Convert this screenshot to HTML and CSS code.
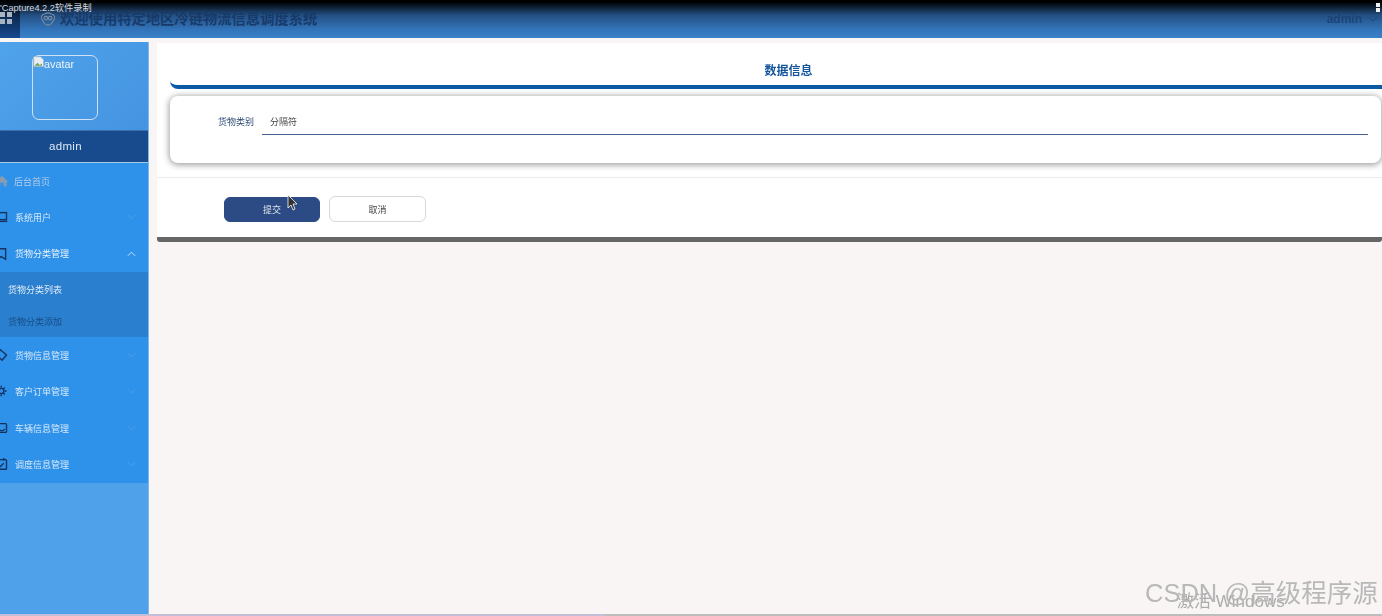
FILE: index.html
```html
<!DOCTYPE html>
<html lang="zh-CN">
<head>
<meta charset="utf-8">
<title>数据信息</title>
<link rel="stylesheet" href="styles.css">
</head>
<body>
<div class="page">
  <header class="topbar">
    <div class="grid-btn">
      <svg width="20" height="26" viewBox="0 0 20 26"><g fill="#a9b4c2"><rect x="0" y="12" width="5" height="5"/><rect x="7" y="12" width="5" height="5"/><rect x="0" y="19" width="5" height="5"/><rect x="7" y="19" width="5" height="5"/></g></svg>
    </div>
    <svg class="logo" width="16" height="14" viewBox="0 0 18 16" fill="none" stroke="#7d8ea3" stroke-width="1.2"><path d="M9 1 C12 1 13 3 15 3 C17 5 17 8 15 10 C14 13 11 15 9 15 C7 15 4 13 3 10 C1 8 1 5 3 3 C5 3 6 1 9 1Z"/><circle cx="6.5" cy="7" r="2"/><circle cx="11.5" cy="7" r="2"/></svg>
    <h1 class="title">欢迎使用特定地区冷链物流信息调度系统</h1>
    <div class="user">admin
      <svg width="10" height="6" viewBox="0 0 10 6" fill="none" stroke="#1c4478" stroke-width="1"><path d="M1 1l4 4 4-4"/></svg>
    </div>
  </header>

  <div class="layout">
    <aside class="sidebar">
      <div class="profile">
        <div class="avatar">
          <svg class="broken" width="12" height="12" viewBox="0 0 16 16"><path d="M1 1h9l4 4v9H1z" fill="#e8eef2" stroke="#a9b4bc" stroke-width=".8"/><path d="M2 13l4-4 3 3 3-2v3z" fill="#6da35f"/></svg><span>avatar</span>
        </div>
      </div>
      <div class="profile-name">admin</div>
      <nav class="menu">
        <a class="item"><svg class="ico home" viewBox="0 0 16 16"><path d="M8 2L1 9h2v5h3v-4h4v4h3V9h2z" fill="#8c9cb0"/></svg><span class="muted">后台首页</span></a>
        <a class="item"><svg class="ico" viewBox="0 0 16 16" fill="none" stroke="#14325f" stroke-width="1.6"><rect x="1" y="3" width="11" height="8"/><path d="M0 13h13"/></svg><span>系统用户</span><svg class="chev" viewBox="0 0 10 6"><path d="M1 1l4 4 4-4"/></svg></a>
        <a class="item open"><svg class="ico" viewBox="0 0 16 16" fill="none" stroke="#14325f" stroke-width="1.6"><path d="M1 2h10v12l-5-3-5 3z"/></svg><span>货物分类管理</span><svg class="chev up" viewBox="0 0 10 6"><path d="M1 5l4-4 4 4"/></svg></a>
        <div class="sub">
          <a class="sub-item active">货物分类列表</a>
          <a class="sub-item dim">货物分类添加</a>
        </div>
        <a class="item"><svg class="ico" viewBox="0 0 16 16" fill="none" stroke="#14325f" stroke-width="1.6"><path d="M5 2l7 6-5 6-6-6z"/></svg><span>货物信息管理</span><svg class="chev" viewBox="0 0 10 6"><path d="M1 1l4 4 4-4"/></svg></a>
        <a class="item"><svg class="ico" viewBox="0 0 16 16" fill="none" stroke="#14325f" stroke-width="1.6"><circle cx="6" cy="8" r="3"/><path d="M6 2v2M6 12v2M0 8h2M10 8h2M2 4l1.500 1.500M10 4L8.500 5.500M2 12l1.500-1.500M10 12l-1.500-1.500"/></svg><span>客户订单管理</span><svg class="chev" viewBox="0 0 10 6"><path d="M1 1l4 4 4-4"/></svg></a>
        <a class="item"><svg class="ico" viewBox="0 0 16 16" fill="none" stroke="#14325f" stroke-width="1.6"><rect x="0" y="3" width="12" height="10" rx="1"/><path d="M1 10h3l1 1h3l2-2"/></svg><span>车辆信息管理</span><svg class="chev" viewBox="0 0 10 6"><path d="M1 1l4 4 4-4"/></svg></a>
        <a class="item"><svg class="ico" viewBox="0 0 16 16" fill="none" stroke="#14325f" stroke-width="1.6"><rect x="0" y="3" width="12" height="11" rx="1"/><path d="M3 1v3M9 1v3M3 9l2 2 4-4"/></svg><span>调度信息管理</span><svg class="chev" viewBox="0 0 10 6"><path d="M1 1l4 4 4-4"/></svg></a>
      </nav>
    </aside>

    <main class="content">
      <section class="panel">
        <h2 class="panel-title">数据信息</h2>
        <div class="card">
          <label class="label">货物类别</label>
          <div class="field">分隔符</div>
        </div>
        <div class="actions">
          <button class="btn primary">提交</button>
          <button class="btn">取消</button>
        </div>
      </section>
    </main>
  </div>
  <div class="bottom-line"></div>

  <div class="capture">'Capture4.2.2软件录制</div>
  <div class="dots"><i></i><i></i></div>
  <svg class="cursor" width="12" height="17" viewBox="0 0 12 17"><path d="M1 1v13l3-3 2 5 2-1-2-5h4z" fill="#333" stroke="#fff" stroke-width=".8"/></svg>
  <div class="activate">激活 Windows</div>
  <div class="watermark">CSDN @高级程序源</div>
</div>
</body>
</html>
```
FILE: styles.css
```css
* { box-sizing: border-box; }
html, body { margin: 0; height: 100%; overflow: hidden; }
body { font-family: "Liberation Sans", "Noto Sans CJK SC", sans-serif; background: #f8f5f4; }
.page { position: relative; width: 1382px; height: 616px; overflow: hidden; display: flex; flex-direction: column; filter: blur(.35px); }

.topbar {
  flex: 0 0 38px; display: flex; align-items: center;
  background: linear-gradient(180deg, #000 0, #000 2px, #234f82 15px, #3273b8 29px, #3a82c8 38px);
}
.grid-btn { width: 20px; height: 38px; background: linear-gradient(180deg, #000 0, #0d2c55 18px, #174a90 38px); flex: none; }
.logo { margin-left: 20px; flex: none; }
.title { margin: 0 0 0 4px; font-size: 14.3px; line-height: 38px; font-weight: 700; color: #173a6a; flex: 1; }
.user { font-size: 12px; font-weight: 700; color: #1c4478; display: flex; align-items: center; gap: 6px; margin-right: 4px; }

.layout { flex: 1; display: flex; padding-top: 4px; gap: 9px; min-height: 0; }
.sidebar { width: 148px; flex: none; display: flex; flex-direction: column; background: #4fa1ea; box-shadow: 1px 0 0 #7db8ee; }
.profile { height: 88px; flex: none; padding: 13px 0 0 32px; background: linear-gradient(135deg, #4fa3ea, #4594e2); }
.avatar { width: 66px; height: 65px; border: 1px solid #cfe2f5; border-radius: 7px; color: #eef5fb; font-size: 10.8px; line-height: 14px; display: flex; align-items: flex-start; }
.avatar span { margin-top: 1px; }
.broken { flex: none; margin-top: 0; margin-right: -1px; }
.profile-name { height: 33px; flex: none; background: #184a8e; color: #dce8f4; font-size: 11.5px; line-height: 31px; text-align: center; padding-right: 17px; border-top: 1px solid #3b70ad; border-bottom: 1px solid #a8c9ea; letter-spacing: .3px; }

.menu { background: #2f92ea; display: flex; flex-direction: column; }
.item { height: 36.33px; display: flex; align-items: center; font-size: 9px; color: #d6e8f8; position: relative; padding-left: 15px; }
.sub ~ .item { height: 36.5px; }
.item.open { color: #eaf3fb; }
.item .muted { color: #b4cde6; margin-left: -1px; }
.ico { position: absolute; left: -4px; top: 11px; width: 14px; height: 14px; }
.ico.home { left: -5px; }
.chev { position: absolute; left: 127px; top: 15px; width: 9px; height: 6px; fill: none; stroke: #55a2e8; stroke-width: 1; }
.chev.up { stroke: #d8e8f6; }
.sub { background: #2a7fcf; height: 65px; display: flex; flex-direction: column; flex: none; }
.sub-item { height: 32.5px; line-height: 36px; padding-left: 8px; font-size: 9px; color: #e3eef8; }
.sub-item.dim { color: #123a6b; opacity: .75; }

.content { flex: 1; min-width: 0; }
.panel { background: #fff; margin-top: 1px; height: 199px; border-bottom: 5px solid #666; border-radius: 0 0 3px 3px; }
.panel-title { margin: 0 0 0 13px; height: 46px; border-bottom: 4px solid #0b5aa3; border-radius: 0 0 0 8px; font-size: 12px; line-height: 56px; text-align: center; color: #14559c; font-weight: 700; padding-left: 25px; }
.card { margin: 7px 1px 0 13px; height: 67px; background: #fff; border-radius: 8px; box-shadow: 0 1px 6px 1px rgba(0,0,0,.38); display: flex; align-items: flex-start; padding: 16px 13px 0 0; }
.label { width: 92px; flex: none; padding: 4px 8px 0 0; font-size: 9px; color: #2d4a72; text-align: right; line-height: 12px; }
.field { flex: 1; height: 23px; border-bottom: 1px solid #465f92; font-size: 9px; color: #444; padding: 4px 0 0 8px; line-height: 12px; }
.actions { margin-top: 14px; border-top: 1px solid #ececec; display: flex; gap: 9px; padding: 18px 0 0 67px; }
.btn { width: 97px; height: 26px; background: #fff; border: 1px solid #d8d8d8; border-radius: 6px; font: 9px "Liberation Sans", "Noto Sans CJK SC", sans-serif; color: #444; padding: 0; }
.btn.primary { width: 96px; background: #2c4a83; border-color: #2c4a83; color: #dfe6f0; height: 25px; margin-top: 1px; }

.bottom-line { height: 2px; flex: none; background: linear-gradient(90deg, #c3bfd8 0, #c3bfd8 605px, #bdbdbd 605px); }

.capture { position: absolute; left: 0; top: 2px; font-size: 9.2px; line-height: 13px; color: #d6d9dd; }
.dots { position: absolute; left: 1376px; top: 3px; display: flex; flex-direction: column; gap: 1px; }
.dots i { display: block; width: 4px; height: 4px; background: #f2f2f2; }
.cursor { position: absolute; left: 287px; top: 194px; }
.activate { position: absolute; left: 1177px; top: 592px; font-size: 17px; color: #ababab; line-height: 20px; white-space: nowrap; }
.watermark { position: absolute; left: 1145px; top: 576px; font-size: 25.5px; line-height: 34px; color: #b8b8b8; white-space: nowrap; }
```
